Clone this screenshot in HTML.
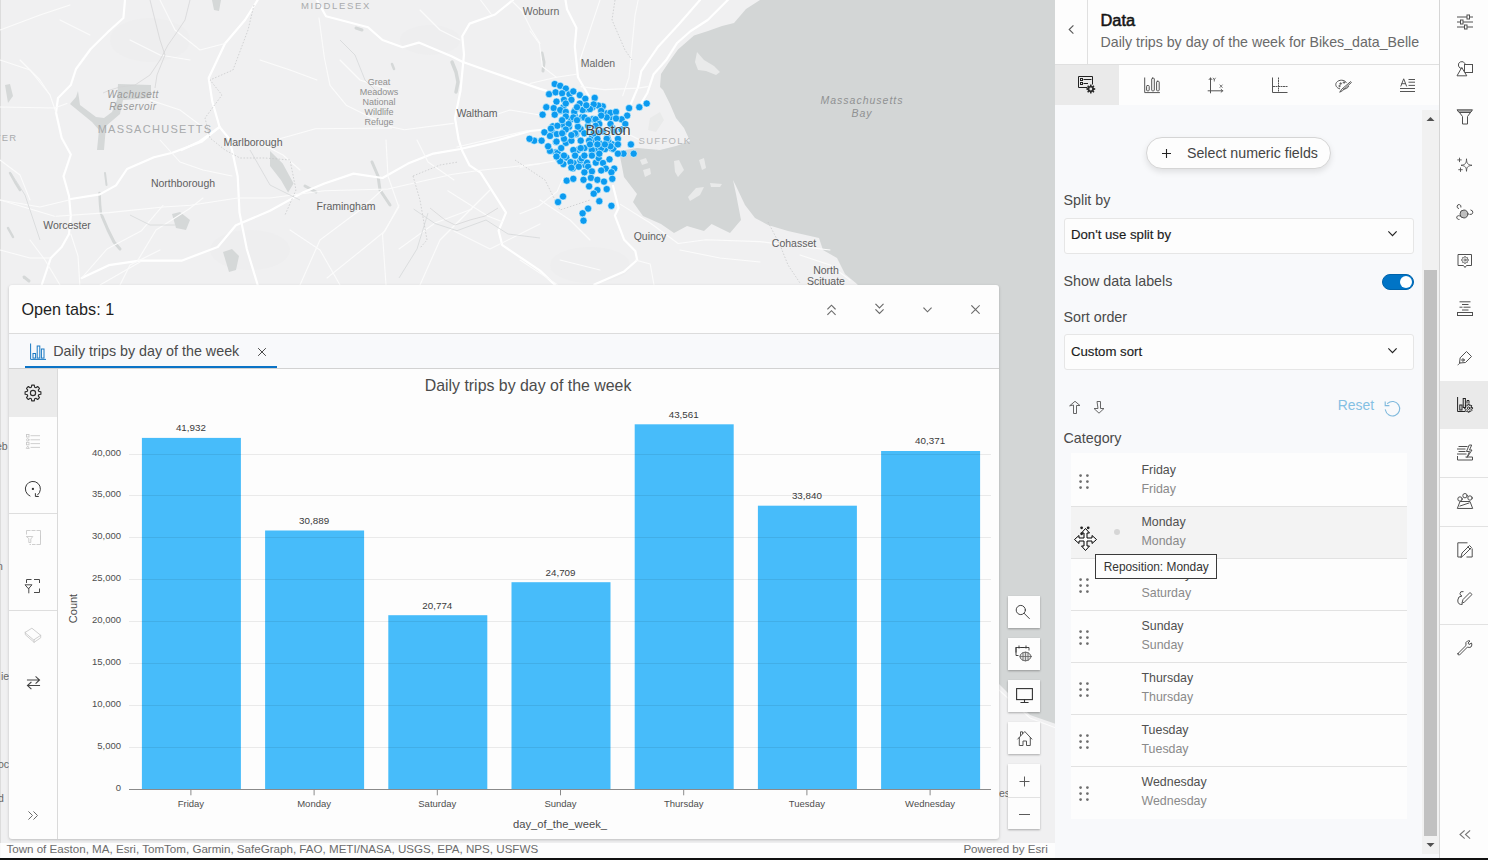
<!DOCTYPE html>
<html><head><meta charset="utf-8">
<style>
*{box-sizing:border-box;margin:0;padding:0}
html,body{width:1488px;height:860px;overflow:hidden;background:#111;font-family:"Liberation Sans",sans-serif}
.abs{position:absolute}
#map{position:absolute;left:0;top:0;width:1056px;height:858px;overflow:hidden}
#attr{position:absolute;left:0;top:843px;width:1055px;height:15px;background:rgba(255,255,255,0.82);font-size:11.6px;color:#6b6b6b;line-height:12px;white-space:nowrap}
#panel{position:absolute;left:9px;top:285px;width:990px;height:554px;background:#fdfdfd;border-radius:3px;box-shadow:0 1px 3px rgba(0,0,0,0.22);overflow:hidden}
#phead{position:absolute;left:0;top:0;width:990px;height:49px;border-bottom:1px solid #dcdcdc}
#ptabs{position:absolute;left:0;top:49px;width:990px;height:35px;background:#f8f9fb;border-bottom:1px solid #d2d2d2}
#side{position:absolute;left:0;top:84px;width:49px;height:470px;border-right:1px solid #dadada}
.ctl{position:absolute;left:1008px;width:32px;height:32px;background:#fdfdfd;box-shadow:0 1px 2px rgba(0,0,0,0.3)}
#rp{position:absolute;left:1055px;top:0;width:384px;height:858px;background:#f8f9fb}
#rphead{position:absolute;left:0;top:0;width:384px;height:65px;background:#fdfdfd;border-bottom:1px solid #e0e0e0}
#rptabs{position:absolute;left:0;top:65px;width:384px;height:40px;background:#fdfdfd}
#tb{position:absolute;left:1439px;top:0;width:49px;height:858px;background:#fdfdfd;border-left:1px solid #d6d6d6}
.lbl{position:absolute;left:8.5px;font-size:14.3px;color:#4a4a4a;white-space:nowrap}
.sel{position:absolute;left:8.5px;width:350px;height:36px;background:#fdfdfd;border:1px solid #e6e6e6;border-radius:3px}
.seltxt{position:absolute;left:6.5px;top:8.5px;font-size:13.2px;color:#1b1b1b;font-weight:normal;-webkit-text-stroke:0.15px #1b1b1b;white-space:nowrap;line-height:16px}
.row{position:absolute;left:16px;width:336px;height:52px;border-bottom:1px solid #e2e2e2;background:#fdfdfd}
.rt1{position:absolute;left:70.5px;font-size:12.4px;color:#505050;white-space:nowrap;line-height:14px}
.rt2{position:absolute;left:70.5px;font-size:12.4px;color:#8a8a8a;white-space:nowrap;line-height:14px}
svg{display:block}
</style></head><body>
<div id="map"><svg width="1056" height="860" viewBox="0 0 1056 860" style="position:absolute;left:0;top:0">
<rect width="1056" height="860" fill="#f0f0f1"/>
<g fill="#eeeeef"><ellipse cx="150" cy="40" rx="40" ry="22"/><ellipse cx="590" cy="265" rx="40" ry="18"/><ellipse cx="430" cy="40" rx="30" ry="15"/><ellipse cx="250" cy="250" rx="40" ry="20"/></g>
<rect x="0" y="0" width="1" height="860" fill="#dcdcdc"/>
<path d="M760.0,0.0 L1056.0,0.0 L1056.0,724.0 L1030.0,715.0 L999.0,684.0 L999.0,295.0 L866.0,295.0 L857.0,284.0 L845.0,274.0 L837.0,258.0 L823.0,250.0 L819.0,238.0 L788.0,231.0 L768.0,225.0 L755.0,218.0 L745.0,205.0 L736.0,186.0 L733.0,180.0 L736.0,194.0 L741.0,220.0 L730.0,233.0 L711.6,224.0 L704.0,231.0 L687.0,226.0 L674.0,233.0 L661.0,224.0 L643.0,216.0 L633.0,202.0 L637.0,194.0 L624.0,177.0 L619.0,151.0 L637.0,148.0 L660.0,150.0 L676.0,146.0 L690.0,141.0 L684.0,128.0 L676.0,118.0 L670.0,104.0 L663.0,90.0 L660.0,87.0 L661.0,74.0 L669.0,62.0 L678.0,49.5 L694.0,35.5 L708.0,31.0 L722.0,26.0 L734.0,23.0 L746.0,9.0Z" fill="#d3d6d6"/>
<path d="M697.0,52.0 L704.0,60.0 L714.0,66.0 L720.0,72.0 L716.0,75.0 L706.0,71.0 L698.0,70.0 L695.0,62.0Z" fill="#e9eaea"/>
<path d="M674.0,161.0 L679.0,160.0 L684.0,170.0 L678.0,177.0 L675.0,172.0Z" fill="#e9eaea"/>
<path d="M643.0,170.0 L650.0,168.0 L651.0,174.0 L645.0,177.0Z" fill="#e9eaea"/>
<path d="M710.0,183.0 L722.0,184.0 L720.0,187.0 L711.0,187.0Z" fill="#e9eaea"/>
<path d="M688.0,197.0 L696.0,188.0 L704.0,187.0 L700.0,195.0 L690.0,201.0Z" fill="#e9eaea"/>
<path d="M699.0,160.0 L704.0,158.0 L706.0,168.0 L702.0,170.0Z" fill="#e9eaea"/>
<path d="M650.0,118.0 L660.0,112.0 L664.0,120.0 L656.0,132.0 L648.0,130.0Z" fill="#e9eaea"/>
<path d="M640.0,160.0 L646.0,158.0 L648.0,163.0 L642.0,165.0Z" fill="#e9eaea"/>
<path d="M78.0,91.0 L80.0,105.0 L96.0,117.0 L104.0,118.0 L112.0,112.0 L117.0,100.0 L118.0,84.0 L151.0,85.0 L151.0,98.0 L123.0,100.0 L120.0,114.0 L106.0,126.0 L104.0,150.0 L97.0,150.0 L99.0,130.0 L92.0,122.0 L70.0,104.0 L76.0,97.0Z" fill="#d5d8d8"/>
<path d="M5.0,85.0 L10.0,84.0 L13.0,96.0 L8.0,103.0Z" fill="#d5d8d8"/>
<path d="M212.0,0.0 L221.0,0.0 L219.0,11.0 L214.0,10.0Z" fill="#d5d8d8"/>
<path d="M172.0,214.0 L180.0,212.0 L190.0,220.0 L186.0,230.0 L176.0,228.0Z" fill="#d5d8d8"/>
<path d="M223.0,252.0 L232.0,249.0 L239.0,256.0 L236.0,270.0 L229.0,272.0 L226.0,262.0Z" fill="#d5d8d8"/>
<path d="M270.0,151.0 L282.7,163.6 L293.6,183.5 L288.1,192.6 L280.9,180.0 L270.0,166.0Z" fill="#d5d8d8"/>
<polyline points="10.0,173.0 15.0,182.0 20.0,190.0" fill="none" stroke="#d5d8d8" stroke-width="2.5" stroke-linecap="round" stroke-linejoin="round"/>
<polyline points="99.5,193.0 100.0,204.0 101.0,214.0" fill="none" stroke="#d5d8d8" stroke-width="2.5" stroke-linecap="round" stroke-linejoin="round"/>
<polyline points="102.0,216.0 108.0,230.0 114.0,242.0 120.0,249.0" fill="none" stroke="#d5d8d8" stroke-width="3" stroke-linecap="round" stroke-linejoin="round"/>
<polyline points="452.0,62.0 456.0,72.0 458.0,82.0 456.0,92.0" fill="none" stroke="#d5d8d8" stroke-width="3.5" stroke-linecap="round" stroke-linejoin="round"/>
<polyline points="356.0,28.0 362.0,30.0" fill="none" stroke="#d5d8d8" stroke-width="3" stroke-linecap="round" stroke-linejoin="round"/>
<polyline points="392.0,64.0 394.0,69.0" fill="none" stroke="#d5d8d8" stroke-width="2.5" stroke-linecap="round" stroke-linejoin="round"/>
<polyline points="372.0,162.0 378.0,176.0 380.0,190.0 390.0,205.0" fill="none" stroke="#d5d8d8" stroke-width="3" stroke-linecap="round" stroke-linejoin="round"/>
<polyline points="305.0,186.0 316.0,192.0" fill="none" stroke="#d5d8d8" stroke-width="3" stroke-linecap="round" stroke-linejoin="round"/>
<polyline points="542.0,53.0 544.0,62.0 543.0,71.0" fill="none" stroke="#d5d8d8" stroke-width="3" stroke-linecap="round" stroke-linejoin="round"/>
<polyline points="8.0,228.0 13.0,237.0" fill="none" stroke="#d5d8d8" stroke-width="2.5" stroke-linecap="round" stroke-linejoin="round"/>
<polyline points="105.0,173.0 106.5,185.0" fill="none" stroke="#d5d8d8" stroke-width="2" stroke-linecap="round" stroke-linejoin="round"/>
<polyline points="24.0,277.0 29.0,281.0" fill="none" stroke="#d5d8d8" stroke-width="3" stroke-linecap="round" stroke-linejoin="round"/>
<g fill="none" stroke="#ffffff" stroke-linecap="round" stroke-linejoin="round">
<polyline points="125.0,0.0 123.4,18.0 109.0,31.0 90.7,49.0 76.0,69.0 70.8,85.0 58.0,98.0 56.0,112.5 61.7,138.0 70.8,154.5 63.5,176.3 69.0,196.0 70.8,216.0 69.0,234.0 61.7,247.0 50.8,258.0 41.7,285.0" stroke-width="2.2"/>
<polyline points="257.7,0.0 245.0,20.0 225.0,43.5 208.7,78.0 212.3,101.6 219.6,127.0 228.6,138.0 232.0,150.0 237.7,176.3 239.5,212.6 246.8,249.0 257.7,285.0" stroke-width="2.2"/>
<polyline points="70.8,199.0 99.8,194.4 116.0,185.4 127.0,169.0 154.0,157.2 172.4,152.7 201.4,141.8 219.6,127.0" stroke-width="2.2"/>
<polyline points="81.7,278.0 108.9,265.2 139.7,260.7 181.5,260.7 217.7,247.0 235.9,225.3 270.0,210.8 302.7,192.6 324.4,183.5 353.5,173.6 382.5,178.0 408.0,163.6 433.3,153.6 460.5,149.0 498.6,140.0 530.0,131.0 560.0,128.0" stroke-width="2.2"/>
<polyline points="513.0,0.0 495.0,14.5 469.6,23.6 462.3,36.3 464.0,54.4 460.5,90.7 455.0,118.0 458.7,140.0 462.3,151.0 469.6,165.4 480.5,172.7 506.0,212.6 498.6,230.7 502.3,245.2 540.0,270.6 555.0,285.0" stroke-width="2.2"/>
<polyline points="317.0,0.0 326.0,16.3 368.0,27.2 382.5,40.0 402.5,47.2 418.8,42.6 451.5,56.3 462.3,61.7 487.7,70.8 540.0,88.9 560.0,95.0" stroke-width="2.2"/>
<polyline points="565.5,0.0 567.0,9.3 576.4,27.8 574.8,46.4 578.0,77.3 588.7,95.8" stroke-width="2.2"/>
<polyline points="613.0,185.8 618.6,208.0 614.9,215.6 624.2,239.8 635.3,251.0 637.2,260.0 624.2,271.4 594.4,284.4" stroke-width="2.2"/>
<polyline points="700.0,0.0 678.4,24.7 658.3,46.4 641.3,71.1 638.2,86.6 629.0,108.2" stroke-width="2.2"/>
<polyline points="727.8,0.0 707.7,20.0 690.7,31.0 676.8,43.3 666.0,60.3 653.6,74.2 647.5,92.7 638.2,108.2" stroke-width="2.2"/>
<polyline points="181.5,150.0 199.6,141.5 219.6,127.0" stroke-width="2.2"/>
<polyline points="0.0,200.0 40.0,207.0 69.0,200.0" stroke-width="1.1" stroke="#fbfbfb"/>
<polyline points="138.0,260.0 156.0,230.0 189.0,209.0 203.0,198.0" stroke-width="1.1" stroke="#fbfbfb"/>
<polyline points="254.0,140.0 283.0,155.0 300.0,170.0" stroke-width="1.1" stroke="#fbfbfb"/>
<polyline points="399.0,249.0 435.0,223.0 472.0,209.0" stroke-width="1.1" stroke="#fbfbfb"/>
<polyline points="327.0,278.0 363.0,249.0 385.0,231.0 399.0,205.0" stroke-width="1.1" stroke="#fbfbfb"/>
<polyline points="454.0,231.0 490.0,249.0 540.0,224.0" stroke-width="1.1" stroke="#fbfbfb"/>
<polyline points="417.0,140.0 428.0,162.0 454.0,180.0" stroke-width="1.1" stroke="#fbfbfb"/>
<polyline points="160.0,140.0 180.0,162.0 203.0,170.0 232.0,176.0" stroke-width="1.1" stroke="#fbfbfb"/>
<polyline points="0.0,160.0 20.0,175.0 30.0,200.0" stroke-width="1.1" stroke="#fbfbfb"/>
<polyline points="30.0,240.0 45.0,260.0 60.0,285.0" stroke-width="1.1" stroke="#fbfbfb"/>
<polyline points="290.0,230.0 320.0,250.0 340.0,285.0" stroke-width="1.1" stroke="#fbfbfb"/>
<polyline points="120.0,285.0 130.0,265.0 160.0,250.0" stroke-width="1.1" stroke="#fbfbfb"/>
<polyline points="150.0,100.0 180.0,110.0 200.0,125.0" stroke-width="1.1" stroke="#fbfbfb"/>
<polyline points="20.0,60.0 40.0,80.0 50.0,95.0" stroke-width="1.1" stroke="#fbfbfb"/>
<polyline points="260.0,60.0 290.0,70.0 317.0,80.0" stroke-width="1.1" stroke="#fbfbfb"/>
<polyline points="340.0,60.0 360.0,80.0 390.0,90.0" stroke-width="1.1" stroke="#fbfbfb"/>
<polyline points="420.0,10.0 440.0,30.0 460.0,40.0" stroke-width="1.1" stroke="#fbfbfb"/>
<polyline points="480.0,120.0 510.0,110.0 540.0,115.0" stroke-width="1.1" stroke="#fbfbfb"/>
<polyline points="600.0,0.0 590.0,30.0 580.0,60.0" stroke-width="1.1" stroke="#fbfbfb"/>
<polyline points="600.0,120.0 620.0,130.0 640.0,140.0" stroke-width="1.1" stroke="#fbfbfb"/>
<polyline points="540.0,200.0 570.0,220.0 590.0,240.0" stroke-width="1.1" stroke="#fbfbfb"/>
<polyline points="560.0,260.0 600.0,270.0" stroke-width="1.1" stroke="#fbfbfb"/>
<polyline points="680.0,250.0 720.0,258.0 760.0,262.0" stroke-width="1.1" stroke="#fbfbfb"/>
<polyline points="800.0,255.0 830.0,265.0 850.0,280.0" stroke-width="1.1" stroke="#fbfbfb"/>
<polyline points="130.0,40.0 160.0,55.0 190.0,60.0" stroke-width="1.1" stroke="#fbfbfb"/>
<polyline points="60.0,20.0 90.0,35.0" stroke-width="1.1" stroke="#fbfbfb"/>
<polyline points="0.0,107.0 54.4,108.0 67.0,103.4" stroke-width="1.1" stroke="#fbfbfb"/>
<polyline points="56.0,216.2 108.9,212.6 163.3,207.0 190.5,205.3 237.7,198.0 270.0,198.0 324.4,190.8 388.0,189.0 451.5,174.5 476.9,170.8 540.0,163.6" stroke-width="1.1" stroke="#fbfbfb"/>
<polyline points="163.0,205.3 141.5,230.7 107.0,249.0 81.7,278.0" stroke-width="1.1" stroke="#fbfbfb"/>
<polyline points="0.0,200.0 36.3,210.8 54.4,216.2" stroke-width="1.1" stroke="#fbfbfb"/>
<polyline points="70.8,234.0 78.0,256.0 79.8,285.0" stroke-width="1.1" stroke="#fbfbfb"/>
<polyline points="319.0,18.0 324.4,58.0 330.0,85.3 346.2,105.2 368.0,116.0 391.6,127.0 404.3,129.7 453.3,123.4" stroke-width="1.1" stroke="#fbfbfb"/>
<polyline points="270.0,141.5 315.4,128.8 391.6,128.0" stroke-width="1.1" stroke="#fbfbfb"/>
<polyline points="480.5,0.0 491.4,14.5" stroke-width="1.1" stroke="#fbfbfb"/>
<polyline points="511.0,0.0 522.0,11.0 531.0,29.0 540.0,43.5" stroke-width="1.1" stroke="#fbfbfb"/>
<polyline points="457.0,147.0 487.7,139.7 527.7,130.6" stroke-width="1.1" stroke="#fbfbfb"/>
<polyline points="386.0,140.0 388.0,176.3 398.8,207.0 382.5,234.4 386.0,285.0" stroke-width="1.1" stroke="#fbfbfb"/>
<polyline points="447.8,190.8 487.7,216.0 502.3,221.7" stroke-width="1.1" stroke="#fbfbfb"/>
<polyline points="620.5,204.4 650.2,223.0 678.1,243.5 706.0,239.8 760.0,241.6 830.0,250.0" stroke-width="1.1" stroke="#fbfbfb"/>
<polyline points="520.0,260.0 557.0,284.4" stroke-width="1.1" stroke="#fbfbfb"/>
<polyline points="635.3,260.0 650.2,264.0 654.0,285.0" stroke-width="1.1" stroke="#fbfbfb"/>
<polyline points="562.8,178.4 557.2,191.4 538.6,206.3 520.0,213.7" stroke-width="1.1" stroke="#fbfbfb"/>
<polyline points="520.0,167.2 561.0,159.8" stroke-width="1.1" stroke="#fbfbfb"/>
<polyline points="638.2,0.0 635.0,15.5 632.0,46.4 629.0,77.3 622.7,95.8" stroke-width="1.1" stroke="#fbfbfb"/>
<polyline points="530.0,31.0 539.3,43.3 542.4,66.5 556.3,77.3 576.4,74.2" stroke-width="1.1" stroke="#fbfbfb"/>
<polyline points="530.0,83.5 556.3,77.3" stroke-width="1.1" stroke="#fbfbfb"/>
<polyline points="581.0,86.6 604.2,89.6 638.2,88.1 647.5,86.6" stroke-width="1.1" stroke="#fbfbfb"/>
<polyline points="160.0,0.0 175.0,30.0 200.0,50.0 225.0,43.5" stroke-width="1.1" stroke="#fbfbfb"/>
<polyline points="0.0,60.0 30.0,70.0 50.0,95.0 56.0,112.5" stroke-width="1.1" stroke="#fbfbfb"/>
<polyline points="0.0,30.0 40.0,15.0 70.0,5.0" stroke-width="1.1" stroke="#fbfbfb"/>
<polyline points="100.0,285.0 140.0,262.0" stroke-width="1.1" stroke="#fbfbfb"/>
<polyline points="300.0,285.0 320.0,240.0 360.0,210.0 382.0,190.0" stroke-width="1.1" stroke="#fbfbfb"/>
<polyline points="420.0,285.0 440.0,240.0 470.0,210.0 490.0,190.0" stroke-width="1.1" stroke="#fbfbfb"/>
<polyline points="999.0,690.0 1030.0,718.0 1056.0,728.0" stroke-width="1.1" stroke="#fbfbfb"/>
<polyline points="0.0,250.0 30.0,258.0 50.0,258.0" stroke-width="1.1" stroke="#fbfbfb"/>
</g>
<g fill="none" stroke="#d6d8d9" stroke-width="0.8"><polyline points="413.6,209 435,223.5 457,230.7 486,220 508,234 540,238"/><polyline points="399,278 417,249 428,213"/><polyline points="11,173 25,195 40,240"/><polyline points="130,215 150,225 175,225"/><polyline points="250,150 270,185 300,200"/><polyline points="340,40 355,55 365,80 380,95"/></g>
<g fill="none" stroke="#c4c6c7" stroke-width="0.7" stroke-dasharray="1.6,1.6"><polyline points="254,5 248,30 233,70 210,80 222,95 205,118 210,138 225,150 240,158 265,158 290,160 296,190 285,215"/><polyline points="413,176 440,165 458,162"/><polyline points="413,176 420,200 427,240 420,248"/><polyline points="515,160 545,180 560,210 590,200"/><polyline points="768,222 780,245 788,265 800,283"/><polyline points="615,0 612,20 625,50 632,60"/></g>
<g fill="none" stroke="#d2d3d4" stroke-width="0.7"><polyline points="150,0 155,20 160,40 165,55 157,75 155,88"/><polyline points="190,0 185,20 175,35 168,45 160,60 150,75 135,85 120,87 110,90 103,93"/><polyline points="430,208 445,220 455,225 470,220 485,216 498,208"/></g>
<g font-family="Liberation Sans, sans-serif" fill="#6f6f6f"><text x="336" y="9" font-size="9.5" fill="#a9abad" letter-spacing="1.7" text-anchor="middle">MIDDLESEX</text><text x="541" y="15" font-size="10.5" fill="#686868" text-anchor="middle">Woburn</text><text x="598" y="67" font-size="10.5" fill="#686868" text-anchor="middle">Malden</text><text x="133" y="98" font-size="10" fill="#999" font-style="italic" text-anchor="middle" letter-spacing="0.5">Wachusett</text><text x="133" y="110" font-size="10" fill="#999" font-style="italic" text-anchor="middle" letter-spacing="0.5">Reservoir</text><text x="155" y="133" font-size="11" fill="#a8aaac" letter-spacing="1.3" text-anchor="middle">MASSACHUSETTS</text><text x="379" y="85" font-size="9" fill="#8f8f8f" text-anchor="middle">Great</text><text x="379" y="95" font-size="9" fill="#8f8f8f" text-anchor="middle">Meadows</text><text x="379" y="105" font-size="9" fill="#8f8f8f" text-anchor="middle">National</text><text x="379" y="115" font-size="9" fill="#8f8f8f" text-anchor="middle">Wildlife</text><text x="379" y="125" font-size="9" fill="#8f8f8f" text-anchor="middle">Refuge</text><text x="477" y="117" font-size="10.5" fill="#5f5f5f" text-anchor="middle">Waltham</text><text x="253" y="146" font-size="10.5" fill="#5f5f5f" text-anchor="middle">Marlborough</text><text x="183" y="187" font-size="10.5" fill="#5f5f5f" text-anchor="middle">Northborough</text><text x="346" y="210" font-size="10.5" fill="#5f5f5f" text-anchor="middle">Framingham</text><text x="67" y="229" font-size="10.5" fill="#5f5f5f" text-anchor="middle">Worcester</text><text x="650" y="240" font-size="10.5" fill="#5f5f5f" text-anchor="middle">Quincy</text><text x="794" y="247" font-size="10.5" fill="#5f5f5f" text-anchor="middle">Cohasset</text><text x="826" y="274" font-size="10.5" fill="#5f5f5f" text-anchor="middle">North</text><text x="826" y="285" font-size="10.5" fill="#5f5f5f" text-anchor="middle">Scituate</text><text x="862" y="104" font-size="10.5" fill="#8f9192" font-style="italic" text-anchor="middle" letter-spacing="1">Massachusetts</text><text x="862" y="117" font-size="10.5" fill="#8f9192" font-style="italic" text-anchor="middle" letter-spacing="1">Bay</text><text x="6" y="141" font-size="9.5" fill="#a9abad" letter-spacing="1.2" text-anchor="middle">TER</text><text x="-4" y="450" font-size="10.5" fill="#686868" >eb</text><text x="-3" y="570" font-size="10.5" fill="#686868" >n</text><text x="1" y="680" font-size="10.5" fill="#686868" >ie</text><text x="-2" y="768" font-size="10.5" fill="#686868" >oc</text><text x="-2" y="802" font-size="10.5" fill="#686868" >d</text><text x="999" y="797" font-size="10.5" fill="#686868" >es</text></g>
<g fill="#0c9bf0" stroke="#e8fbff" stroke-width="0.6">
<circle cx="578.3" cy="149.9" r="3.6"/>
<circle cx="578.9" cy="128.8" r="3.6"/>
<circle cx="563.6" cy="131.9" r="3.6"/>
<circle cx="607.9" cy="146.4" r="3.6"/>
<circle cx="607.1" cy="142.7" r="3.6"/>
<circle cx="594.1" cy="141.7" r="3.6"/>
<circle cx="555.8" cy="152.4" r="3.6"/>
<circle cx="596.3" cy="149.3" r="3.6"/>
<circle cx="560.5" cy="111.0" r="3.6"/>
<circle cx="564.7" cy="126.1" r="3.6"/>
<circle cx="592.0" cy="135.8" r="3.6"/>
<circle cx="596.4" cy="121.4" r="3.6"/>
<circle cx="591.9" cy="147.0" r="3.6"/>
<circle cx="572.9" cy="168.3" r="3.6"/>
<circle cx="595.8" cy="162.7" r="3.6"/>
<circle cx="570.6" cy="119.6" r="3.6"/>
<circle cx="576.0" cy="134.2" r="3.6"/>
<circle cx="599.3" cy="143.2" r="3.6"/>
<circle cx="574.6" cy="114.9" r="3.6"/>
<circle cx="573.8" cy="163.2" r="3.6"/>
<circle cx="565.9" cy="142.9" r="3.6"/>
<circle cx="592.6" cy="107.1" r="3.6"/>
<circle cx="585.4" cy="165.2" r="3.6"/>
<circle cx="551.8" cy="131.5" r="3.6"/>
<circle cx="582.0" cy="117.2" r="3.6"/>
<circle cx="596.5" cy="135.4" r="3.6"/>
<circle cx="557.6" cy="152.9" r="3.6"/>
<circle cx="598.7" cy="158.2" r="3.6"/>
<circle cx="612.4" cy="144.4" r="3.6"/>
<circle cx="586.9" cy="108.9" r="3.6"/>
<circle cx="598.5" cy="122.3" r="3.6"/>
<circle cx="575.2" cy="110.0" r="3.6"/>
<circle cx="563.5" cy="124.9" r="3.6"/>
<circle cx="602.8" cy="106.4" r="3.6"/>
<circle cx="556.0" cy="141.9" r="3.6"/>
<circle cx="611.9" cy="148.6" r="3.6"/>
<circle cx="563.2" cy="107.4" r="3.6"/>
<circle cx="592.7" cy="119.1" r="3.6"/>
<circle cx="562.6" cy="157.0" r="3.6"/>
<circle cx="608.2" cy="140.5" r="3.6"/>
<circle cx="590.4" cy="148.1" r="3.6"/>
<circle cx="613.3" cy="148.8" r="3.6"/>
<circle cx="596.5" cy="150.4" r="3.6"/>
<circle cx="558.9" cy="159.0" r="3.6"/>
<circle cx="605.1" cy="149.1" r="3.6"/>
<circle cx="552.8" cy="126.3" r="3.6"/>
<circle cx="598.3" cy="105.6" r="3.6"/>
<circle cx="580.4" cy="160.6" r="3.6"/>
<circle cx="563.4" cy="164.1" r="3.6"/>
<circle cx="597.7" cy="133.2" r="3.6"/>
<circle cx="592.0" cy="153.0" r="3.6"/>
<circle cx="587.0" cy="162.7" r="3.6"/>
<circle cx="569.1" cy="126.8" r="3.6"/>
<circle cx="607.3" cy="137.6" r="3.6"/>
<circle cx="566.3" cy="157.5" r="3.6"/>
<circle cx="612.5" cy="128.0" r="3.6"/>
<circle cx="556.8" cy="134.1" r="3.6"/>
<circle cx="580.7" cy="129.2" r="3.6"/>
<circle cx="609.6" cy="117.6" r="3.6"/>
<circle cx="606.7" cy="113.4" r="3.6"/>
<circle cx="554.7" cy="84.0" r="3.6"/>
<circle cx="560.2" cy="85.8" r="3.6"/>
<circle cx="565.8" cy="88.6" r="3.6"/>
<circle cx="549.1" cy="94.2" r="3.6"/>
<circle cx="555.6" cy="92.3" r="3.6"/>
<circle cx="562.1" cy="93.3" r="3.6"/>
<circle cx="569.5" cy="94.2" r="3.6"/>
<circle cx="573.3" cy="91.4" r="3.6"/>
<circle cx="579.8" cy="95.1" r="3.6"/>
<circle cx="585.3" cy="98.8" r="3.6"/>
<circle cx="594.7" cy="97.9" r="3.6"/>
<circle cx="593.7" cy="104.4" r="3.6"/>
<circle cx="590.0" cy="109.1" r="3.6"/>
<circle cx="579.8" cy="103.5" r="3.6"/>
<circle cx="571.4" cy="99.8" r="3.6"/>
<circle cx="564.0" cy="99.8" r="3.6"/>
<circle cx="556.5" cy="101.6" r="3.6"/>
<circle cx="546.3" cy="107.2" r="3.6"/>
<circle cx="553.7" cy="108.1" r="3.6"/>
<circle cx="560.2" cy="110.0" r="3.6"/>
<circle cx="565.8" cy="111.9" r="3.6"/>
<circle cx="574.2" cy="111.9" r="3.6"/>
<circle cx="582.6" cy="110.0" r="3.6"/>
<circle cx="601.2" cy="110.9" r="3.6"/>
<circle cx="610.5" cy="112.8" r="3.6"/>
<circle cx="616.0" cy="111.9" r="3.6"/>
<circle cx="629.1" cy="108.1" r="3.6"/>
<circle cx="639.3" cy="107.2" r="3.6"/>
<circle cx="646.7" cy="103.5" r="3.6"/>
<circle cx="627.2" cy="115.6" r="3.6"/>
<circle cx="621.6" cy="119.3" r="3.6"/>
<circle cx="616.0" cy="118.4" r="3.6"/>
<circle cx="606.7" cy="117.4" r="3.6"/>
<circle cx="601.2" cy="115.6" r="3.6"/>
<circle cx="595.6" cy="119.3" r="3.6"/>
<circle cx="584.4" cy="117.4" r="3.6"/>
<circle cx="573.3" cy="117.4" r="3.6"/>
<circle cx="565.8" cy="116.5" r="3.6"/>
<circle cx="554.7" cy="114.7" r="3.6"/>
<circle cx="542.6" cy="114.7" r="3.6"/>
<circle cx="557.4" cy="125.8" r="3.6"/>
<circle cx="550.9" cy="128.6" r="3.6"/>
<circle cx="544.4" cy="132.3" r="3.6"/>
<circle cx="568.6" cy="124.0" r="3.6"/>
<circle cx="577.9" cy="126.7" r="3.6"/>
<circle cx="588.1" cy="125.8" r="3.6"/>
<circle cx="599.3" cy="124.0" r="3.6"/>
<circle cx="610.5" cy="124.0" r="3.6"/>
<circle cx="625.3" cy="124.0" r="3.6"/>
<circle cx="534.2" cy="140.7" r="3.6"/>
<circle cx="529.5" cy="138.8" r="3.6"/>
<circle cx="541.6" cy="140.7" r="3.6"/>
<circle cx="550.0" cy="136.0" r="3.6"/>
<circle cx="556.5" cy="141.6" r="3.6"/>
<circle cx="564.0" cy="138.8" r="3.6"/>
<circle cx="571.4" cy="140.7" r="3.6"/>
<circle cx="580.7" cy="140.7" r="3.6"/>
<circle cx="589.1" cy="140.7" r="3.6"/>
<circle cx="597.4" cy="138.8" r="3.6"/>
<circle cx="606.7" cy="138.8" r="3.6"/>
<circle cx="617.9" cy="138.8" r="3.6"/>
<circle cx="630.9" cy="144.4" r="3.6"/>
<circle cx="633.7" cy="153.7" r="3.6"/>
<circle cx="623.5" cy="153.7" r="3.6"/>
<circle cx="617.9" cy="153.7" r="3.6"/>
<circle cx="617.9" cy="144.4" r="3.6"/>
<circle cx="610.5" cy="146.3" r="3.6"/>
<circle cx="601.2" cy="148.1" r="3.6"/>
<circle cx="591.9" cy="150.0" r="3.6"/>
<circle cx="584.4" cy="148.1" r="3.6"/>
<circle cx="573.3" cy="150.0" r="3.6"/>
<circle cx="561.2" cy="148.1" r="3.6"/>
<circle cx="550.0" cy="150.9" r="3.6"/>
<circle cx="548.1" cy="146.3" r="3.6"/>
<circle cx="560.2" cy="161.2" r="3.6"/>
<circle cx="564.0" cy="155.6" r="3.6"/>
<circle cx="556.5" cy="156.5" r="3.6"/>
<circle cx="570.5" cy="162.1" r="3.6"/>
<circle cx="578.8" cy="166.7" r="3.6"/>
<circle cx="588.1" cy="166.7" r="3.6"/>
<circle cx="581.6" cy="158.4" r="3.6"/>
<circle cx="591.9" cy="155.6" r="3.6"/>
<circle cx="599.3" cy="153.7" r="3.6"/>
<circle cx="609.5" cy="159.3" r="3.6"/>
<circle cx="603.0" cy="163.0" r="3.6"/>
<circle cx="605.8" cy="168.6" r="3.6"/>
<circle cx="614.2" cy="168.6" r="3.6"/>
<circle cx="611.4" cy="172.3" r="3.6"/>
<circle cx="601.2" cy="170.5" r="3.6"/>
<circle cx="591.9" cy="171.4" r="3.6"/>
<circle cx="584.4" cy="172.3" r="3.6"/>
<circle cx="571.4" cy="167.7" r="3.6"/>
<circle cx="566.7" cy="180.7" r="3.6"/>
<circle cx="573.3" cy="178.8" r="3.6"/>
<circle cx="583.5" cy="179.8" r="3.6"/>
<circle cx="590.9" cy="177.9" r="3.6"/>
<circle cx="597.4" cy="179.8" r="3.6"/>
<circle cx="604.0" cy="181.6" r="3.6"/>
<circle cx="612.3" cy="178.8" r="3.6"/>
<circle cx="589.1" cy="186.3" r="3.6"/>
<circle cx="597.4" cy="190.0" r="3.6"/>
<circle cx="606.7" cy="189.1" r="3.6"/>
<circle cx="593.7" cy="193.7" r="3.6"/>
<circle cx="599.3" cy="201.2" r="3.6"/>
<circle cx="611.4" cy="205.8" r="3.6"/>
<circle cx="588.1" cy="208.6" r="3.6"/>
<circle cx="582.6" cy="213.3" r="3.6"/>
<circle cx="583.5" cy="220.7" r="3.6"/>
<circle cx="563.0" cy="196.5" r="3.6"/>
<circle cx="558.0" cy="202.1" r="3.6"/>
<circle cx="565.8" cy="129.5" r="3.6"/>
<circle cx="575.1" cy="133.3" r="3.6"/>
<circle cx="584.4" cy="133.3" r="3.6"/>
<circle cx="593.7" cy="133.3" r="3.6"/>
<circle cx="603.0" cy="131.4" r="3.6"/>
<circle cx="614.2" cy="131.4" r="3.6"/>
<circle cx="621.6" cy="129.5" r="3.6"/>
<circle cx="577.0" cy="120.2" r="3.6"/>
<circle cx="588.1" cy="120.2" r="3.6"/>
<circle cx="595.6" cy="125.8" r="3.6"/>
<circle cx="562.1" cy="133.3" r="3.6"/>
<circle cx="571.4" cy="135.1" r="3.6"/>
<circle cx="580.7" cy="148.1" r="3.6"/>
<circle cx="590.0" cy="144.4" r="3.6"/>
<circle cx="597.4" cy="144.4" r="3.6"/>
<circle cx="604.9" cy="144.4" r="3.6"/>
<circle cx="575.1" cy="155.6" r="3.6"/>
<circle cx="584.4" cy="155.6" r="3.6"/>
<circle cx="565.8" cy="103.5" r="3.6"/>
<circle cx="577.0" cy="107.2" r="3.6"/>
<circle cx="586.3" cy="105.3" r="3.6"/>
<circle cx="562.1" cy="120.2" r="3.6"/>
</g>
<g font-family="Liberation Sans, sans-serif"><text x="665" y="144" font-size="9.5" fill="#b3b5b6" letter-spacing="1.3" text-anchor="middle">SUFFOLK</text><text x="608" y="135" font-size="14.5" fill="#474747" text-anchor="middle" stroke="#ffffff" stroke-opacity="0.5" stroke-width="1.5" paint-order="stroke">Boston</text></g>
</svg></div>
<div id="attr"><span class="abs" style="left:6.4px;top:0">Town of Easton, MA, Esri, TomTom, Garmin, SafeGraph, FAO, METI/NASA, USGS, EPA, NPS, USFWS</span><span class="abs" style="left:963.4px;top:0">Powered by Esri</span></div>

<div id="panel">
 <div id="phead">
  <div class="abs" style="left:12.5px;top:14px;font-size:16.2px;color:#1f1f1f;line-height:20px;white-space:nowrap">Open tabs: 1</div>
  <svg class="abs" style="left:817.5px;top:18.5px;overflow:visible" width="9" height="12" viewBox="0 0 9 12"><g fill="none" stroke="#6b6b6b" stroke-width="1.1" stroke-linecap="square" ><path d="M0.8,5 L4.5,1.2 L8.2,5 M0.8,10.5 L4.5,6.7 L8.2,10.5"/></g></svg><svg class="abs" style="left:865.5px;top:17.5px;overflow:visible" width="9" height="12" viewBox="0 0 9 12"><g fill="none" stroke="#6b6b6b" stroke-width="1.1" stroke-linecap="square" ><path d="M0.8,1.2 L4.5,5 L8.2,1.2 M0.8,6.7 L4.5,10.5 L8.2,6.7"/></g></svg><svg class="abs" style="left:913.5px;top:21.5px;overflow:visible" width="9" height="6" viewBox="0 0 9 6"><g fill="none" stroke="#6b6b6b" stroke-width="1.1" stroke-linecap="square" ><path d="M0.8,1 L4.5,4.8 L8.2,1"/></g></svg><svg class="abs" style="left:961.5px;top:19.5px;overflow:visible" width="9" height="9" viewBox="0 0 9 9"><g fill="none" stroke="#6b6b6b" stroke-width="1.1" stroke-linecap="square" ><path d="M0.7,0.7 L8.3,8.3 M8.3,0.7 L0.7,8.3"/></g></svg>
 </div>
 <div id="ptabs">
  <svg class="abs" style="left:20.8px;top:9.600000000000023px;overflow:visible" width="16" height="16" viewBox="0 0 16 16"><g fill="none" stroke="#1979c3" stroke-width="1" stroke-linecap="square" stroke-linecap="butt"><path d="M0.6,0 V15.4 H15.5"/><rect x="3" y="9.5" width="2.6" height="4.6"/><rect x="7.2" y="2" width="2.6" height="12.1"/><rect x="11.4" y="5" width="2.6" height="9.1"/></g></svg>
  <div class="abs" style="left:44.3px;top:9.3px;font-size:14.3px;color:#4a4a4a;line-height:17px;white-space:nowrap">Daily trips by day of the week</div>
  <svg class="abs" style="left:249px;top:13.5px;overflow:visible" width="8" height="8" viewBox="0 0 8 8"><g fill="none" stroke="#4a4a4a" stroke-width="1" stroke-linecap="square" stroke-linecap="butt"><path d="M0.5,0.5 L7.5,7.5 M7.5,0.5 L0.5,7.5"/></g></svg>
  <div class="abs" style="left:16px;top:32px;width:252px;height:2px;background:#0a73c6"></div>
 </div>
 <div id="side">
  <div class="abs" style="left:0;top:0;width:48px;height:48px;background:#ebebeb"></div>
  <svg class="abs" style="left:0;top:0" width="48" height="48"><path d="M29.77,22.36 L31.89,22.70 L31.89,25.30 L29.77,25.64 L29.24,26.92 L30.50,28.66 L28.66,30.50 L26.92,29.24 L25.64,29.77 L25.30,31.89 L22.70,31.89 L22.36,29.77 L21.08,29.24 L19.34,30.50 L17.50,28.66 L18.76,26.92 L18.23,25.64 L16.11,25.30 L16.11,22.70 L18.23,22.36 L18.76,21.08 L17.50,19.34 L19.34,17.50 L21.08,18.76 L22.36,18.23 L22.70,16.11 L25.30,16.11 L25.64,18.23 L26.92,18.76 L28.66,17.50 L30.50,19.34 L29.24,21.08Z" fill="none" stroke="#2e2e2e" stroke-width="1.15" stroke-linejoin="round"/><circle cx="24" cy="24" r="2.6" fill="none" stroke="#2e2e2e" stroke-width="1.15"/></svg><svg class="abs" style="left:17px;top:65px;overflow:visible" width="14" height="15" viewBox="0 0 14 15"><g fill="none" stroke="#c9c9c9" stroke-width="0.9" stroke-linecap="square" ><rect x="0.5" y="0.5" width="2.5" height="2.5"/><circle cx="1.75" cy="5.8" r="1.2"/><rect x="0.5" y="8.3" width="2.5" height="2.5"/><path d="M0.5,14 L1.75,12 L3,14Z"/><path d="M5,1.7 H13.5 M5,5.8 H13.5 M5,9.6 H13.5 M5,13.4 H13.5"/></g></svg><svg class="abs" style="left:16px;top:112px;overflow:visible" width="16" height="16" viewBox="0 0 16 16"><g fill="none" stroke="#3a3a3a" stroke-width="1" stroke-linecap="square" ><path d="M4.9,15 A7.6,7.6 0 1 1 12.6,14"/><path d="M10.4,12.2 V15.5 H13.8" stroke-linecap="butt"/><rect x="6.9" y="6.9" width="2" height="2" fill="#333" stroke="none"/></g></svg><svg class="abs" style="left:16.5px;top:160.5px;overflow:visible" width="15" height="15" viewBox="0 0 15 15"><g fill="none" stroke="#c9c9c9" stroke-width="0.9" stroke-linecap="square" ><path d="M0.5,4 V0.5 H4 M11,0.5 H14.5 V14.5 H11 M4,14.5 H4.5"/><path d="M0.8,6.5 H6.8 L4.8,9 V12.5 L2.8,12.5 V9Z"/><path d="M6,0.5 H9 M9,14.5 H6.5 M14.5,6 V9"/></g></svg><svg class="abs" style="left:16px;top:209px;overflow:visible" width="16" height="16" viewBox="0 0 16 16"><g fill="none" stroke="#4a4a4a" stroke-width="1" stroke-linecap="square" stroke-linecap="butt" stroke-linejoin="miter"><path d="M1.5,4.5 V1.5 H6 M9.5,1.5 H14.5 V4.5 M14.5,11 V14.5 H9.5"/><path d="M0.5,6.8 H7 L3.8,10.4 Z M3.8,10.4 V14.8"/></g></svg><svg class="abs" style="left:15px;top:257px;overflow:visible" width="18" height="20" viewBox="0 0 18 20"><g fill="none" stroke="#c9c9c9" stroke-width="0.9" stroke-linecap="square" stroke-linejoin="round"><path d="M1.3,6.3 L7.9,2.2 L16.7,9.3 L10.1,13.7 Z M1.3,6.3 V8.7 L10.1,16.3 L16.7,11.8 V9.3 M10.1,13.7 V16.3"/></g></svg><svg class="abs" style="left:17.5px;top:306.5px;overflow:visible" width="13" height="13" viewBox="0 0 13 13"><g fill="none" stroke="#444" stroke-width="1.1" stroke-linecap="square" ><path d="M0.5,4 H12.5 M9,0.8 L12.5,4 L9,7.2"/><path d="M12.5,9.5 H0.5 M4,6.3 L0.5,9.5 L4,12.7"/></g></svg><svg class="abs" style="left:18.5px;top:441.5px;overflow:visible" width="11" height="9" viewBox="0 0 11 9"><g fill="none" stroke="#6a6a6a" stroke-width="1" stroke-linecap="square" ><path d="M0.8,0.8 L4.5,4.5 L0.8,8.2 M5.8,0.8 L9.5,4.5 L5.8,8.2"/></g></svg>
  <div class="abs" style="left:0;top:144px;width:48px;height:1px;background:#dedede"></div>
  <div class="abs" style="left:0;top:241px;width:48px;height:1px;background:#dedede"></div>
 </div>
 <svg width="941" height="470" viewBox="58 369 941 470" style="position:absolute;left:49px;top:84px" font-family="Liberation Sans, sans-serif">
<text x="528" y="391" font-size="15.9" fill="#4b4b4b" text-anchor="middle">Daily trips by day of the week</text>
<rect x="141.9" y="437.9" width="99" height="351.4" fill="#47bcfa"/>
<rect x="265.1" y="530.5" width="99" height="258.8" fill="#47bcfa"/>
<rect x="388.3" y="615.2" width="99" height="174.1" fill="#47bcfa"/>
<rect x="511.5" y="582.2" width="99" height="207.1" fill="#47bcfa"/>
<rect x="634.7" y="424.3" width="99" height="365.0" fill="#47bcfa"/>
<rect x="757.9" y="505.7" width="99" height="283.6" fill="#47bcfa"/>
<rect x="881.1" y="451.0" width="99" height="338.3" fill="#47bcfa"/>
<line x1="129.0" x2="991" y1="747.5" y2="747.5" stroke="#000" stroke-opacity="0.075" stroke-width="1"/>
<text x="121" y="748.7" font-size="9.5" fill="#4e4e4e" text-anchor="end">5,000</text>
<line x1="129.0" x2="991" y1="705.5" y2="705.5" stroke="#000" stroke-opacity="0.075" stroke-width="1"/>
<text x="121" y="706.7" font-size="9.5" fill="#4e4e4e" text-anchor="end">10,000</text>
<line x1="129.0" x2="991" y1="663.5" y2="663.5" stroke="#000" stroke-opacity="0.075" stroke-width="1"/>
<text x="121" y="664.7" font-size="9.5" fill="#4e4e4e" text-anchor="end">15,000</text>
<line x1="129.0" x2="991" y1="621.5" y2="621.5" stroke="#000" stroke-opacity="0.075" stroke-width="1"/>
<text x="121" y="622.7" font-size="9.5" fill="#4e4e4e" text-anchor="end">20,000</text>
<line x1="129.0" x2="991" y1="579.5" y2="579.5" stroke="#000" stroke-opacity="0.075" stroke-width="1"/>
<text x="121" y="580.7" font-size="9.5" fill="#4e4e4e" text-anchor="end">25,000</text>
<line x1="129.0" x2="991" y1="537.5" y2="537.5" stroke="#000" stroke-opacity="0.075" stroke-width="1"/>
<text x="121" y="538.7" font-size="9.5" fill="#4e4e4e" text-anchor="end">30,000</text>
<line x1="129.0" x2="991" y1="495.5" y2="495.5" stroke="#000" stroke-opacity="0.075" stroke-width="1"/>
<text x="121" y="496.7" font-size="9.5" fill="#4e4e4e" text-anchor="end">35,000</text>
<line x1="129.0" x2="991" y1="454.5" y2="454.5" stroke="#000" stroke-opacity="0.075" stroke-width="1"/>
<text x="121" y="455.7" font-size="9.5" fill="#4e4e4e" text-anchor="end">40,000</text>
<text x="121" y="790.5" font-size="9.5" fill="#4e4e4e" text-anchor="end">0</text>
<line x1="129.0" x2="991" y1="789.5" y2="789.5" stroke="#8a8a8a" stroke-width="1"/>
<line x1="190.9" x2="190.9" y1="789.3" y2="795.3" stroke="#8a8a8a" stroke-width="1"/>
<text x="190.9" y="807.2" font-size="9.5" fill="#4e4e4e" text-anchor="middle">Friday</text>
<text x="190.9" y="431.3" font-size="9.8" fill="#3a3a3a" text-anchor="middle">41,932</text>
<line x1="314.1" x2="314.1" y1="789.3" y2="795.3" stroke="#8a8a8a" stroke-width="1"/>
<text x="314.1" y="807.2" font-size="9.5" fill="#4e4e4e" text-anchor="middle">Monday</text>
<text x="314.1" y="523.9" font-size="9.8" fill="#3a3a3a" text-anchor="middle">30,889</text>
<line x1="437.3" x2="437.3" y1="789.3" y2="795.3" stroke="#8a8a8a" stroke-width="1"/>
<text x="437.3" y="807.2" font-size="9.5" fill="#4e4e4e" text-anchor="middle">Saturday</text>
<text x="437.3" y="608.6" font-size="9.8" fill="#3a3a3a" text-anchor="middle">20,774</text>
<line x1="560.5" x2="560.5" y1="789.3" y2="795.3" stroke="#8a8a8a" stroke-width="1"/>
<text x="560.5" y="807.2" font-size="9.5" fill="#4e4e4e" text-anchor="middle">Sunday</text>
<text x="560.5" y="575.6" font-size="9.8" fill="#3a3a3a" text-anchor="middle">24,709</text>
<line x1="683.7" x2="683.7" y1="789.3" y2="795.3" stroke="#8a8a8a" stroke-width="1"/>
<text x="683.7" y="807.2" font-size="9.5" fill="#4e4e4e" text-anchor="middle">Thursday</text>
<text x="683.7" y="417.7" font-size="9.8" fill="#3a3a3a" text-anchor="middle">43,561</text>
<line x1="806.9" x2="806.9" y1="789.3" y2="795.3" stroke="#8a8a8a" stroke-width="1"/>
<text x="806.9" y="807.2" font-size="9.5" fill="#4e4e4e" text-anchor="middle">Tuesday</text>
<text x="806.9" y="499.1" font-size="9.8" fill="#3a3a3a" text-anchor="middle">33,840</text>
<line x1="930.1" x2="930.1" y1="789.3" y2="795.3" stroke="#8a8a8a" stroke-width="1"/>
<text x="930.1" y="807.2" font-size="9.5" fill="#4e4e4e" text-anchor="middle">Wednesday</text>
<text x="930.1" y="444.4" font-size="9.8" fill="#3a3a3a" text-anchor="middle">40,371</text>
<text x="560" y="827.6" font-size="11.2" fill="#4b4b4b" text-anchor="middle">day_of_the_week_</text>
<text transform="translate(76.5,608.5) rotate(-90)" font-size="11" fill="#4b4b4b" text-anchor="middle">Count</text>
</svg>
</div>

<div class="ctl" style="top:596px"></div><div class="ctl" style="top:638px"></div><div class="ctl" style="top:680px"></div><div class="ctl" style="top:722px"></div><div class="ctl" style="top:764px;height:65px"><div class="abs" style="left:0;top:33px;width:32px;height:1px;background:#e2e2e2"></div></div><svg class="abs" style="left:1015px;top:604px;overflow:visible" width="16" height="16" viewBox="0 0 16 16"><g fill="none" stroke="#444" stroke-width="1" stroke-linecap="square" stroke-linecap="butt"><circle cx="5.8" cy="6" r="4.6"/><path d="M9.2,9.4 L14.3,14.5"/></g></svg><svg class="abs" style="left:1015px;top:645px;overflow:visible" width="18" height="18" viewBox="0 0 18 18"><g fill="none" stroke="#333" stroke-width="1" stroke-linecap="square" ><path d="M1,7 V2.5 H14 V5 M1,2.5 V10.5 H3" stroke-width="0.9"/><path d="M4,1 V3 M11,1 V3 M6.5,2.5 H8.5" stroke-width="0.9"/><ellipse cx="10.5" cy="11.5" rx="5.5" ry="4.3" fill="#bbb" fill-opacity="0.45" stroke="#555" stroke-width="0.9"/><path d="M5,11.5 H16 M10.5,7.2 V15.8 M8,7.6 V15.4 M13,7.6 V15.4" stroke="#666" stroke-width="0.8"/></g></svg><svg class="abs" style="left:1015.5px;top:688px;overflow:visible" width="17" height="16" viewBox="0 0 17 16"><g fill="none" stroke="#333" stroke-width="1.1" stroke-linecap="square" ><rect x="0.6" y="0.6" width="15.8" height="11"/><path d="M8.5,11.6 V14 M5,14.5 H12"/></g></svg><svg class="abs" style="left:1016.5px;top:729.5px;overflow:visible" width="16" height="17" viewBox="0 0 16 17"><g fill="none" stroke="#555" stroke-width="1" stroke-linecap="square" stroke-linejoin="miter" stroke-linecap="butt"><path d="M0.8,9 L7.8,1.5 L14.8,9 M2.3,7.5 V15.5 H6 V11 H9.5 V15.5 H13.3 V7.5 M3.5,5.5 V1.8 H5.5 V3.6"/></g></svg><svg class="abs" style="left:1020px;top:777px;overflow:visible" width="9" height="9" viewBox="0 0 9 9"><g fill="none" stroke="#5a5a5a" stroke-width="1" stroke-linecap="square" stroke-linecap="butt"><path d="M4.5,0 V9 M0,4.5 H9"/></g></svg><svg class="abs" style="left:1019px;top:809px;overflow:visible" width="11" height="10" viewBox="0 0 11 10"><g fill="none" stroke="#5a5a5a" stroke-width="1" stroke-linecap="square" stroke-linecap="butt"><path d="M0.5,5.5 H10.5"/></g></svg>

<div id="rp">
 <div id="rphead">
  <div class="abs" style="left:32px;top:0;width:1px;height:64px;background:#e0e0e0"></div>
  <svg class="abs" style="left:12.5px;top:25.2px;overflow:visible" width="6" height="9" viewBox="0 0 6 9"><g fill="none" stroke="#5a5a5a" stroke-width="1.1" stroke-linecap="square" ><path d="M5,0.8 L1.2,4.5 L5,8.2"/></g></svg>
  <div class="abs" style="left:45.5px;top:11px;font-size:16.4px;color:#151515;font-weight:normal;line-height:19px;white-space:nowrap;-webkit-text-stroke:0.55px #151515">Data</div>
  <div class="abs" style="left:45.5px;top:33.5px;font-size:14.2px;color:#6a6a6a;line-height:17px;white-space:nowrap">Daily trips by day of the week for Bikes_data_Belle</div>
 </div>
 <div id="rptabs">
  <div class="abs" style="left:0;top:0;width:64px;height:40px;background:#eaeaea"></div>
  <svg class="abs" style="left:23px;top:11px;overflow:visible" width="18" height="18" viewBox="0 0 18 18"><g fill="none" stroke="#222" stroke-width="1" stroke-linecap="square" stroke-linecap="butt"><path d="M9,11.5 H0.5 V0.5 H14.5 V8"/><rect x="2.5" y="2.5" width="2" height="2"/><rect x="2.5" y="6.5" width="2" height="2"/><path d="M6,3.5 H13 M6,7.5 H9.5"/><path d="M15.87,12.11 L17.24,12.30 L17.24,13.70 L15.87,13.89 L15.60,14.54 L16.44,15.65 L15.45,16.64 L14.34,15.80 L13.69,16.07 L13.50,17.44 L12.10,17.44 L11.91,16.07 L11.26,15.80 L10.15,16.64 L9.16,15.65 L10.00,14.54 L9.73,13.89 L8.36,13.70 L8.36,12.30 L9.73,12.11 L10.00,11.46 L9.16,10.35 L10.15,9.36 L11.26,10.20 L11.91,9.93 L12.10,8.56 L13.50,8.56 L13.69,9.93 L14.34,10.20 L15.45,9.36 L16.44,10.35 L15.60,11.46Z" fill="#2a2a2a" stroke="none"/><circle cx="12.8" cy="13" r="1.4" fill="#eaeaea" stroke="none"/></g></svg><svg class="abs" style="left:89px;top:12px;overflow:visible" width="17" height="17" viewBox="0 0 17 17"><g fill="none" stroke="#555" stroke-width="1" stroke-linecap="square" stroke-linecap="butt"><path d="M0.7,1 V15.6 H15.4"/><rect x="2.6" y="8.5" width="2.6" height="5.3" rx="0.8"/><rect x="7.7" y="1.2" width="2.6" height="12.6" rx="0.8"/><rect x="12.6" y="4.3" width="2.6" height="9.5" rx="0.8"/></g></svg><svg class="abs" style="left:152px;top:12px;overflow:visible" width="17" height="17" viewBox="0 0 17 17"><g fill="none" stroke="#555" stroke-width="1" stroke-linecap="square" stroke-linecap="butt"><path d="M3.5,1 V15.8 M1.2,13.8 H15.7 M2.2,2.5 L3.5,1 L4.8,2.5 M14.2,12.5 L15.7,13.8 L14.2,15.1"/><path d="M6.3,1.2 L7.3,2.6 L8.3,1.2 M7.3,2.6 V4 M13,8 L15.2,10.4 M15.2,8 L13,10.4" stroke-width="0.8"/></g></svg><svg class="abs" style="left:216px;top:12px;overflow:visible" width="17" height="17" viewBox="0 0 17 17"><g fill="none" stroke="#555" stroke-width="1" stroke-linecap="square" stroke-linecap="butt"><path d="M1.5,1 V15.5 H16"/><path d="M7.5,1 V14 M2.5,9.5 H16" stroke-dasharray="1,1.5"/></g></svg><svg class="abs" style="left:279.5px;top:13.5px;overflow:visible" width="18" height="15" viewBox="0 0 18 15"><g fill="none" stroke="#555" stroke-width="1" stroke-linecap="square" stroke-linecap="butt" stroke-linejoin="round"><path d="M11.2,3.2 C9.6,0.6 3.8,0.2 1.4,3.6 C-0.2,6 1.4,9 4.6,9.8"/><path d="M8.5,10.2 C10.6,10 12.8,9.2 13.6,7.6"/><path d="M5,12.8 L6.8,10.2 L15.6,2.6 L16.4,3.5 L8,11.2 Z"/><path d="M4.8,4.6 H6.6 M5.7,3.7 V5.5 M8.2,3.5 H10 M9.1,2.6 V4.4 M3.8,7 H5.4 M4.6,6.2 V7.8" stroke-width="0.8"/></g></svg><svg class="abs" style="left:344.5px;top:13px;overflow:visible" width="16" height="15" viewBox="0 0 16 15"><g fill="none" stroke="#555" stroke-width="1" stroke-linecap="square" stroke-linecap="butt"><path d="M0.9,8 L3.7,0.8 L6.5,8 M1.9,5.7 H5.5" stroke-linejoin="miter"/><path d="M9,1.5 H14.5 M9,4.2 H14.5 M9,7.4 H14.5 M0.5,10.5 H14.5 M0.5,13.5 H14.5"/></g></svg>
 </div>
 <!-- scrollbar -->
 <div class="abs" style="left:367px;top:110px;width:17px;height:744px;background:#f1f1f1"></div>
 <div class="abs" style="left:369px;top:270px;width:13px;height:566px;background:#c1c1c1"></div>
 <svg class="abs" style="left:371px;top:116px" width="9" height="6"><path d="M0.5,5 L4.5,1 L8.5,5Z" fill="#505050"/></svg>
 <svg class="abs" style="left:371px;top:842px" width="9" height="6"><path d="M0.5,1 L4.5,5 L8.5,1Z" fill="#505050"/></svg>

 <!-- select numeric fields button -->
 <div class="abs" style="left:91px;top:137px;width:184.5px;height:31.5px;border-radius:16px;background:#fdfdfd;border:1px solid #d5d5d5;box-shadow:0 3px 6px rgba(0,0,0,0.10)">
   <svg class="abs" style="left:14px;top:10px" width="11" height="11"><path d="M5.5,1V10M1,5.5H10" stroke="#222" stroke-width="1.1"/></svg>
   <div class="abs" style="left:40px;top:6.5px;font-size:14.2px;color:#444;line-height:17px;white-space:nowrap">Select numeric fields</div>
 </div>
 <div class="lbl" style="top:192px;line-height:17px">Split by</div>
 <div class="sel" style="top:217.5px"><div class="seltxt">Don't use split by</div><svg class="abs" style="left:323.5px;top:12.8px;overflow:visible" width="9" height="6" viewBox="0 0 9 6"><g fill="none" stroke="#222" stroke-width="1.2" stroke-linecap="square" ><path d="M0.8,0.8 L4.5,4.6 L8.2,0.8"/></g></svg></div>
 <div class="lbl" style="top:273px;line-height:17px">Show data labels</div>
 <div class="abs" style="left:327px;top:274px;width:32px;height:16px;border-radius:8px;background:#0074c6;border:1px solid #0063aa"><div class="abs" style="left:17px;top:1px;width:12px;height:12px;border-radius:50%;background:#fff"></div></div>
 <div class="lbl" style="top:308.5px;line-height:17px">Sort order</div>
 <div class="sel" style="top:334.2px"><div class="seltxt">Custom sort</div><svg class="abs" style="left:323.5px;top:12.8px;overflow:visible" width="9" height="6" viewBox="0 0 9 6"><g fill="none" stroke="#222" stroke-width="1.2" stroke-linecap="square" ><path d="M0.8,0.8 L4.5,4.6 L8.2,0.8"/></g></svg></div>
 <svg class="abs" style="left:14px;top:401px;overflow:visible" width="12" height="14" viewBox="0 0 12 14"><g fill="none" stroke="#666" stroke-width="1" stroke-linecap="square" stroke-linejoin="miter" stroke-linecap="butt"><path d="M1,4.5 L6,0.3 L11,4.5 H7.5 V12.5 H4.5 V4.5 Z"/></g></svg><svg class="abs" style="left:38px;top:401px;overflow:visible" width="12" height="14" viewBox="0 0 12 14"><g fill="none" stroke="#666" stroke-width="1" stroke-linecap="square" stroke-linejoin="miter" stroke-linecap="butt"><path d="M4.5,0.5 H7.5 V7.5 H11 L6,12.2 L1,7.5 H4.5 Z"/></g></svg>
 <div class="abs" style="left:282.8px;top:397.3px;font-size:13.9px;color:#84c0e3;line-height:17px;white-space:nowrap">Reset</div>
 <svg class="abs" style="left:329px;top:399.5px;overflow:visible" width="18" height="17" viewBox="0 0 18 17"><g fill="none" stroke="#7fb9dc" stroke-width="1.1" stroke-linecap="square" ><path d="M3.6,3.4 A7.2,7.2 0 1 1 1.4,10"/><path d="M1.2,1.4 V5.6 H5.4" stroke-linecap="butt"/></g></svg>
 <div class="lbl" style="top:430px;line-height:17px">Category</div>
 <div class="abs" style="left:16px;top:453px;width:336px;height:365px;background:#fdfdfd"></div><div class="row" style="top:455px;background:#fdfdfd"><svg class="abs" style="left:8.2px;top:18.5px" width="10" height="15"><circle cx="1.6" cy="1.6" r="1.35" fill="#6e6e6e"/><circle cx="1.6" cy="7.6" r="1.35" fill="#6e6e6e"/><circle cx="1.6" cy="13.6" r="1.35" fill="#6e6e6e"/><circle cx="8.4" cy="1.6" r="1.35" fill="#6e6e6e"/><circle cx="8.4" cy="7.6" r="1.35" fill="#6e6e6e"/><circle cx="8.4" cy="13.6" r="1.35" fill="#6e6e6e"/></svg><div class="rt1" style="top:8.3px">Friday</div><div class="rt2" style="top:26.8px">Friday</div></div><div class="row" style="top:507px;background:#f3f3f3"><div class="abs" style="left:43px;top:22px;width:6px;height:6px;border-radius:50%;background:#d6d6d6"></div><div class="rt1" style="top:8.3px">Monday</div><div class="rt2" style="top:26.8px">Monday</div></div><div class="row" style="top:559px;background:#fdfdfd"><svg class="abs" style="left:8.2px;top:18.5px" width="10" height="15"><circle cx="1.6" cy="1.6" r="1.35" fill="#6e6e6e"/><circle cx="1.6" cy="7.6" r="1.35" fill="#6e6e6e"/><circle cx="1.6" cy="13.6" r="1.35" fill="#6e6e6e"/><circle cx="8.4" cy="1.6" r="1.35" fill="#6e6e6e"/><circle cx="8.4" cy="7.6" r="1.35" fill="#6e6e6e"/><circle cx="8.4" cy="13.6" r="1.35" fill="#6e6e6e"/></svg><div class="rt1" style="top:8.3px">Saturday</div><div class="rt2" style="top:26.8px">Saturday</div></div><div class="row" style="top:611px;background:#fdfdfd"><svg class="abs" style="left:8.2px;top:18.5px" width="10" height="15"><circle cx="1.6" cy="1.6" r="1.35" fill="#6e6e6e"/><circle cx="1.6" cy="7.6" r="1.35" fill="#6e6e6e"/><circle cx="1.6" cy="13.6" r="1.35" fill="#6e6e6e"/><circle cx="8.4" cy="1.6" r="1.35" fill="#6e6e6e"/><circle cx="8.4" cy="7.6" r="1.35" fill="#6e6e6e"/><circle cx="8.4" cy="13.6" r="1.35" fill="#6e6e6e"/></svg><div class="rt1" style="top:8.3px">Sunday</div><div class="rt2" style="top:26.8px">Sunday</div></div><div class="row" style="top:663px;background:#fdfdfd"><svg class="abs" style="left:8.2px;top:18.5px" width="10" height="15"><circle cx="1.6" cy="1.6" r="1.35" fill="#6e6e6e"/><circle cx="1.6" cy="7.6" r="1.35" fill="#6e6e6e"/><circle cx="1.6" cy="13.6" r="1.35" fill="#6e6e6e"/><circle cx="8.4" cy="1.6" r="1.35" fill="#6e6e6e"/><circle cx="8.4" cy="7.6" r="1.35" fill="#6e6e6e"/><circle cx="8.4" cy="13.6" r="1.35" fill="#6e6e6e"/></svg><div class="rt1" style="top:8.3px">Thursday</div><div class="rt2" style="top:26.8px">Thursday</div></div><div class="row" style="top:715px;background:#fdfdfd"><svg class="abs" style="left:8.2px;top:18.5px" width="10" height="15"><circle cx="1.6" cy="1.6" r="1.35" fill="#6e6e6e"/><circle cx="1.6" cy="7.6" r="1.35" fill="#6e6e6e"/><circle cx="1.6" cy="13.6" r="1.35" fill="#6e6e6e"/><circle cx="8.4" cy="1.6" r="1.35" fill="#6e6e6e"/><circle cx="8.4" cy="7.6" r="1.35" fill="#6e6e6e"/><circle cx="8.4" cy="13.6" r="1.35" fill="#6e6e6e"/></svg><div class="rt1" style="top:8.3px">Tuesday</div><div class="rt2" style="top:26.8px">Tuesday</div></div><div class="row" style="top:767px;background:#fdfdfd;border-bottom:none"><svg class="abs" style="left:8.2px;top:18.5px" width="10" height="15"><circle cx="1.6" cy="1.6" r="1.35" fill="#6e6e6e"/><circle cx="1.6" cy="7.6" r="1.35" fill="#6e6e6e"/><circle cx="1.6" cy="13.6" r="1.35" fill="#6e6e6e"/><circle cx="8.4" cy="1.6" r="1.35" fill="#6e6e6e"/><circle cx="8.4" cy="7.6" r="1.35" fill="#6e6e6e"/><circle cx="8.4" cy="13.6" r="1.35" fill="#6e6e6e"/></svg><div class="rt1" style="top:8.3px">Wednesday</div><div class="rt2" style="top:26.8px">Wednesday</div></div>
 <div class="abs" style="left:40.2px;top:554.2px;width:122px;height:24.6px;background:#fdfdfd;border:1px solid #3a3a3a"><div class="abs" style="left:7.5px;top:4.5px;font-size:11.9px;color:#333;line-height:14px;white-space:nowrap">Reposition: Monday</div></div><svg class="abs" style="left:19px;top:528px" width="23" height="23"><path d="M11.5,0.5 L15.5,5 H13 V10 H18 V7.5 L22.5,11.5 L18,15.5 V13 H13 V18 H15.5 L11.5,22.5 L7.5,18 H10 V13 H5 V15.5 L0.5,11.5 L5,7.5 V10 H10 V5 H7.5Z" fill="#fff" stroke="#000" stroke-width="1"/></svg><svg class="abs" style="left:25.2px;top:525.5px" width="10" height="10"><circle cx="1.6" cy="1.8" r="1.4" fill="#222"/><circle cx="8.2" cy="1.8" r="1.4" fill="#222"/><circle cx="1.6" cy="7.8" r="1.4" fill="#222"/></svg>
</div>

<div id="tb">
 <div class="abs" style="left:0;top:381px;width:48px;height:48px;background:#eaeaea"></div><div class="abs" style="left:0;top:477px;width:48px;height:1px;background:#e2e2e2"></div><div class="abs" style="left:0;top:526px;width:48px;height:1px;background:#e2e2e2"></div><div class="abs" style="left:0;top:623.5px;width:48px;height:1px;background:#e2e2e2"></div><svg class="abs" style="left:17px;top:14.5px;overflow:visible" width="16" height="16" viewBox="0 0 16 16"><g fill="none" stroke="#505050" stroke-width="1" stroke-linecap="square" stroke-linecap="butt"><path d="M0.5,2 H15.5 M0.5,7 H15.5 M0.5,12 H15.5"/><rect x="10" y="0" width="2.5" height="4" fill="#fdfdfd"/><rect x="3.5" y="5" width="2.5" height="4" fill="#fdfdfd"/><rect x="7.5" y="10" width="2.5" height="4" fill="#fdfdfd"/></g></svg><svg class="abs" style="left:17px;top:61px;overflow:visible" width="16" height="16" viewBox="0 0 16 16"><g fill="none" stroke="#505050" stroke-width="1" stroke-linecap="square" ><path d="M5.5,7.5 A3.5,3.5 0 1 1 8,2.5"/><rect x="7.5" y="3.5" width="8" height="8"/><path d="M5,7 L9.8,14.8 H0.5Z" fill="#fdfdfd"/></g></svg><svg class="abs" style="left:17px;top:109px;overflow:visible" width="16" height="16" viewBox="0 0 16 16"><g fill="none" stroke="#505050" stroke-width="1" stroke-linecap="square" stroke-linejoin="round"><path d="M0.5,0.8 H15.5 L13.5,3.5 H2.5Z M2.5,3.5 L5.5,7.5 V15 H10.5 V7.5 L13.5,3.5"/><path d="M1.5,2 H14.5"/></g></svg><svg class="abs" style="left:17px;top:157px;overflow:visible" width="16" height="16" viewBox="0 0 16 16"><g fill="none" stroke="#505050" stroke-width="0.9" stroke-linecap="square" stroke-linejoin="round"><path d="M9.5,2.3 C9.8,6.6 10.4,7.6 15,8.3 C10.4,9 9.8,10 9.5,14.3 C9.2,10 8.6,9 4,8.3 C8.6,7.6 9.2,6.6 9.5,2.3Z"/><path d="M2.5,1.2 V4.6 M0.8,2.9 H4.2 M3.5,11 V14.4 M1.8,12.7 H5.2" stroke-width="0.9"/></g></svg><svg class="abs" style="left:17px;top:205px;overflow:visible" width="16" height="16" viewBox="0 0 16 16"><g fill="none" stroke="#505050" stroke-width="1" stroke-linecap="square" ><circle cx="7" cy="9" r="4" fill="#bdbdbd"/><path d="M1.5,3.5 A2,2 0 1 1 4,2 M14,5 A2,2 0 1 1 13,9.5 M2,14.5 A2,2 0 1 1 3,11"/></g></svg><svg class="abs" style="left:17px;top:253px;overflow:visible" width="16" height="16" viewBox="0 0 16 16"><g fill="none" stroke="#505050" stroke-width="1" stroke-linecap="square" ><path d="M1.5,1.5 H14.5 V12.5 H9.5 L8,14.5 L6.5,12.5 H1.5Z"/><path d="M10.50,6.29 L11.45,6.43 L11.45,7.57 L10.50,7.71 L10.27,8.27 L10.84,9.04 L10.04,9.84 L9.27,9.27 L8.71,9.50 L8.57,10.45 L7.43,10.45 L7.29,9.50 L6.73,9.27 L5.96,9.84 L5.16,9.04 L5.73,8.27 L5.50,7.71 L4.55,7.57 L4.55,6.43 L5.50,6.29 L5.73,5.73 L5.16,4.96 L5.96,4.16 L6.73,4.73 L7.29,4.50 L7.43,3.55 L8.57,3.55 L8.71,4.50 L9.27,4.73 L10.04,4.16 L10.84,4.96 L10.27,5.73Z" fill="none" stroke="#505050" stroke-width="0.75" stroke-linejoin="round"/><circle cx="8" cy="7" r="1.1" fill="none" stroke="#505050" stroke-width="0.75"/></g></svg><svg class="abs" style="left:17px;top:301px;overflow:visible" width="16" height="16" viewBox="0 0 16 16"><g fill="none" stroke="#505050" stroke-width="1" stroke-linecap="square" stroke-linecap="butt"><path d="M3,0.8 H13 M5.5,3.5 H11 M3,6.2 H5 M7,6.2 H13 M5.5,9 H11 M0.5,11.5 H15.5 M0.5,14.5 H15.5 M0.5,11.5 V14.5 M15.5,11.5 V14.5"/></g></svg><svg class="abs" style="left:17px;top:349px;overflow:visible" width="16" height="16" viewBox="0 0 16 16"><g fill="none" stroke="#505050" stroke-width="1" stroke-linecap="square" stroke-linejoin="round"><path d="M3.5,8.5 L9.5,2.5 L14.5,7.5 L8.5,13.5 L3,14Z"/><circle cx="6" cy="11" r="1.2"/><path d="M3,14 Q1.5,14.8 1,15.8" stroke-width="0.8"/></g></svg><svg class="abs" style="left:17px;top:397px;overflow:visible" width="16" height="16" viewBox="0 0 16 16"><g fill="none" stroke="#222" stroke-width="1" stroke-linecap="square" stroke-linecap="butt"><path d="M0.6,0.5 V14.5 H8"/><rect x="2.8" y="8" width="2.2" height="5"/><rect x="6.2" y="1.5" width="2.2" height="9"/><path d="M10,6 V3.5 H12 V6"/><path d="M14.39,10.41 L15.55,10.55 L15.55,11.85 L14.39,11.99 L14.13,12.61 L14.85,13.53 L13.93,14.45 L13.01,13.73 L12.39,13.99 L12.25,15.15 L10.95,15.15 L10.81,13.99 L10.19,13.73 L9.27,14.45 L8.35,13.53 L9.07,12.61 L8.81,11.99 L7.65,11.85 L7.65,10.55 L8.81,10.41 L9.07,9.79 L8.35,8.87 L9.27,7.95 L10.19,8.67 L10.81,8.41 L10.95,7.25 L12.25,7.25 L12.39,8.41 L13.01,8.67 L13.93,7.95 L14.85,8.87 L14.13,9.79Z" fill="none" stroke="#222" stroke-width="1" stroke-linejoin="round"/><circle cx="11.6" cy="11.2" r="1.2" fill="none" stroke="#222" stroke-width="1"/></g></svg><svg class="abs" style="left:17px;top:445px;overflow:visible" width="16" height="16" viewBox="0 0 16 16"><g fill="none" stroke="#505050" stroke-width="1" stroke-linecap="square" stroke-linecap="butt" stroke-linejoin="round"><path d="M2,1.5 H10 M0.5,4 H8 M2,6.5 H8 M0.5,9 H9"/><path d="M0.5,11.5 V15 H15.5 V12 H9"/><path d="M12,0.5 L9.5,6.5 H12.5 L10,12.5 L15,5 H12.5 L14.5,0.5Z"/></g></svg><svg class="abs" style="left:17px;top:493px;overflow:visible" width="16" height="16" viewBox="0 0 16 16"><g fill="none" stroke="#505050" stroke-width="1" stroke-linecap="square" stroke-linejoin="round"><circle cx="3" cy="6" r="2.2"/><circle cx="8" cy="2.7" r="2.2"/><circle cx="13" cy="5" r="2.2"/><path d="M0.5,15 L3,8.5 H13 L15.5,15Z M3,13 L12,10"/></g></svg><svg class="abs" style="left:17px;top:542px;overflow:visible" width="16" height="16" viewBox="0 0 16 16"><g fill="none" stroke="#505050" stroke-width="1" stroke-linecap="square" stroke-linejoin="round"><path d="M10,0.8 H0.8 V15 H4 M15.2,7 V15 H10"/><path d="M4,15 L5,11 L12.5,3.5 L14.5,5.5 L7,13Z M11,5 L13,7"/></g></svg><svg class="abs" style="left:17px;top:590px;overflow:visible" width="16" height="16" viewBox="0 0 16 16"><g fill="none" stroke="#505050" stroke-width="1" stroke-linecap="square" stroke-linejoin="round"><path d="M5,13 L6,9.5 L13,2.5 L15,4.5 L8,11.5Z"/><path d="M6,1.5 Q3,1 3,3.5 Q3,5.5 5,6 Q1,6 0.8,10 Q0.5,15 5,14.5"/></g></svg><svg class="abs" style="left:17px;top:640px;overflow:visible" width="16" height="16" viewBox="0 0 16 16"><g fill="none" stroke="#505050" stroke-width="1" stroke-linecap="square" stroke-linejoin="round"><path d="M1,13.5 L9,5.5 Q8,2 10.5,1 Q12,0.5 13,1 L11,3 L12,4.5 L14.5,3 Q15.5,5 14,7 Q12,8 10.5,7 L2.5,15 Q0.5,15.5 1,13.5Z"/></g></svg><svg class="abs" style="left:19px;top:830px;overflow:visible" width="12" height="9" viewBox="0 0 12 9"><g fill="none" stroke="#777" stroke-width="1.1" stroke-linecap="square" ><path d="M5.2,0.8 L1,4.5 L5.2,8.2 M10.7,0.8 L6.5,4.5 L10.7,8.2"/></g></svg>
</div>
<div class="abs" style="left:0;top:858px;width:1488px;height:2px;background:#111"></div>
</body></html>
